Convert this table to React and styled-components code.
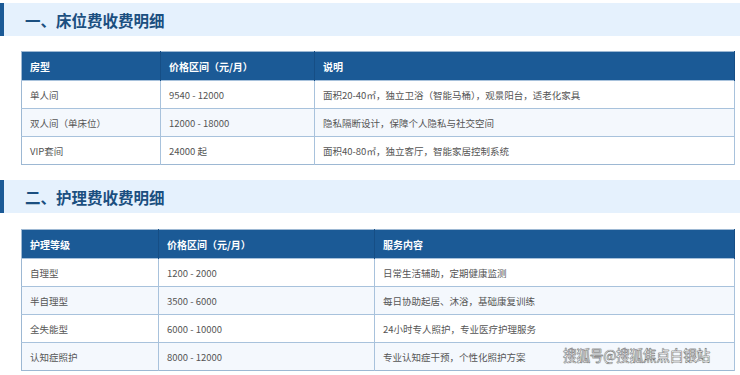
import React from 'react';
import styled, { createGlobalStyle } from 'styled-components';

const GlobalStyle = createGlobalStyle`
  body {
    margin: 0;
    background: #ffffff;
    font-family: "Noto Sans CJK SC", "Noto Sans", sans-serif;
  }
`;

const Page = styled.div`
  position: relative;
  width: 740px;
  height: 375px;
  padding-top: 3px;
  box-sizing: border-box;
  overflow: hidden;
`;

const SectionTitle = styled.h2`
  margin: 0;
  height: 33px;
  display: flex;
  align-items: center;
  padding-left: 21px;
  border-left: 4px solid #1b5a96;
  background-color: #e5f1fd;
  color: #1b4f80;
  font-size: 15.5px;
  font-weight: 700;
`;

const Table = styled.table`
  margin: ${(p) => p.$top}px 6px 15px 21px;
  width: 713px;
  border-collapse: collapse;
  table-layout: fixed;
  border: 1px solid #9db8d3;
  font-size: 9.5px;

  th {
    height: 28px;
    padding: 0 8px;
    text-align: left;
    background-color: #1b5a96;
    color: #ffffff;
    font-size: 10px;
    font-weight: 700;
    border-right: 1px solid #164e85;
  }
  td {
    height: 27px;
    padding: 0 8px;
    color: #555555;
    border-top: 1px solid #a8c2dc;
    border-right: 1px solid #a8c2dc;
  }
  tbody tr:nth-child(even) td {
    background-color: #f4f8fd;
  }
`;

const Watermark = styled.div`
  position: absolute;
  left: 563px;
  top: 344px;
  font-size: 15px;
  letter-spacing: -0.4px;
  transform: scaleX(0.92);
  transform-origin: left center;
  color: #ffffff;
  -webkit-text-stroke: 0.35px #555;
  text-shadow: 0 0 1px #666;
  font-weight: 400;
`;

const bedRows = [
  ['单人间', '9540 - 12000', '面积20-40㎡，独立卫浴（智能马桶），观景阳台，适老化家具'],
  ['双人间（单床位）', '12000 - 18000', '隐私隔断设计，保障个人隐私与社交空间'],
  ['VIP套间', '24000 起', '面积40-80㎡，独立客厅，智能家居控制系统'],
];

const careRows = [
  ['自理型', '1200 - 2000', '日常生活辅助，定期健康监测'],
  ['半自理型', '3500 - 6000', '每日协助起居、沐浴，基础康复训练'],
  ['全失能型', '6000 - 10000', '24小时专人照护，专业医疗护理服务'],
  ['认知症照护', '8000 - 12000', '专业认知症干预，个性化照护方案'],
];

const FeeTable = ({ top, widths, head, rows }) => (
  <Table $top={top}>
    <colgroup>
      {widths.map((w, i) => (
        <col key={i} style={{ width: w }} />
      ))}
    </colgroup>
    <thead>
      <tr>
        {head.map((h) => (
          <th key={h}>{h}</th>
        ))}
      </tr>
    </thead>
    <tbody>
      {rows.map((r) => (
        <tr key={r[0]}>
          {r.map((c, i) => (
            <td key={i}>{c}</td>
          ))}
        </tr>
      ))}
    </tbody>
  </Table>
);

const App = () => {
  return (
    <>
      <GlobalStyle />
      <Page>
        <SectionTitle>一、床位费收费明细</SectionTitle>
        <FeeTable
          top={15}
          widths={[139, 154, 420]}
          head={['房型', '价格区间（元/月）', '说明']}
          rows={bedRows}
        />
        <SectionTitle>二、护理费收费明细</SectionTitle>
        <FeeTable
          top={16}
          widths={[137, 216, 360]}
          head={['护理等级', '价格区间（元/月）', '服务内容']}
          rows={careRows}
        />
        <Watermark>搜狐号@搜狐焦点白银站</Watermark>
      </Page>
    </>
  );
};

export default App;
